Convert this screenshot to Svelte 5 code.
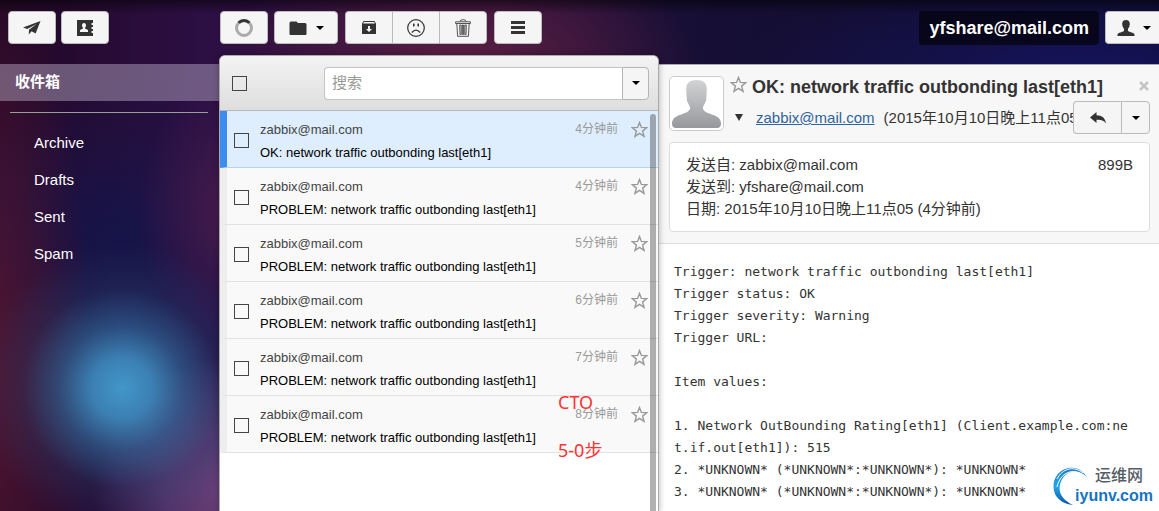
<script>
  const folders = ["Archive", "Drafts", "Sent", "Spam"];

  const PROBLEM = "PROBLEM: network traffic outbonding last[eth1]";

  let messages = $state([
    { subject: "OK: network traffic outbonding last[eth1]", age: 4, checked: false },
    { subject: PROBLEM, age: 4, checked: false },
    { subject: PROBLEM, age: 5, checked: false },
    { subject: PROBLEM, age: 6, checked: false },
    { subject: PROBLEM, age: 7, checked: false },
    { subject: PROBLEM, age: 8, checked: false },
  ]);

  let selected = $state(0);
  let allChecked = $state(false);
  let query = $state("");

  const body = `Trigger: network traffic outbonding last[eth1]
Trigger status: OK
Trigger severity: Warning
Trigger URL:

Item values:

1. Network OutBounding Rating[eth1] (Client.example.com:net.if.out[eth1]): 515
2. *UNKNOWN* (*UNKNOWN*:*UNKNOWN*): *UNKNOWN*
3. *UNKNOWN* (*UNKNOWN*:*UNKNOWN*): *UNKNOWN*`;

  function toggleAll() {
    for (const m of messages) m.checked = allChecked;
  }
</script>

{#snippet star()}
  <svg class="star" viewBox="0 0 18 18" width="17" height="17" aria-hidden="true">
    <path d="M9 1.6 11 6.8 16.7 7.1 12.3 10.7 13.8 16.2 9 13.1 4.2 16.2 5.7 10.7 1.3 7.1 7 6.8Z" />
  </svg>
{/snippet}

{#snippet caret()}
  <svg class="caret" viewBox="0 0 8 4" width="8" height="4" aria-hidden="true">
    <path d="M0 0H8L4 4Z" />
  </svg>
{/snippet}

<div class="app">
  <aside class="side">
    <div class="toolbar">
      <button class="btn" aria-label="写邮件">
        <svg viewBox="0 0 18 16" width="18" height="16">
          <path d="M17.500 1 0 7.600 4.300 9 13.600 4 6 9.800 5.800 14.600 8.600 11.200 12.600 13.600Z" />
        </svg>
      </button>
      <button class="btn" aria-label="通讯录">
        <svg viewBox="0 0 16 16" width="16" height="16">
          <path fill-rule="evenodd" d="M0 0H16V3H14.500V5H16V7H14.500V9H16V11H14.500V13H16V16H0ZM7 3C5.600 3 5 4 5 5.300 5 6.500 5.400 7.300 6 7.800V8.600L3 10V12H11V10L8 8.600V7.800C8.600 7.300 9 6.500 9 5.300 9 4 8.400 3 7 3Z" />
        </svg>
      </button>
    </div>
    <nav>
      <a class="inbox" href="#inbox">收件箱</a>
      <hr />
      {#each folders as folder}
        <a class="folder" href="#{folder.toLowerCase()}">{folder}</a>
      {/each}
    </nav>
  </aside>

  <section class="middle">
    <div class="toolbar">
      <button class="btn" aria-label="刷新">
        <svg viewBox="0 0 18 18" width="18" height="18">
          <circle cx="9" cy="9" r="7.5" fill="none" stroke="#aaa" stroke-width="3" />
          <path d="M3.700 3.700A7.500 7.500 0 0 1 14.300 3.700" fill="none" stroke="#333" stroke-width="3" />
        </svg>
      </button>
      <button class="btn wide" aria-label="移动到文件夹">
        <svg viewBox="0 0 18 14" width="18" height="14">
          <path d="M1 14 0.500 13V2Q0.500 .5 2 .5H7.500L9 2H16Q17.500 2 17.500 3.500V13L17 14Z" />
        </svg>
        {@render caret()}
      </button>
      <div class="group">
        <button class="btn" aria-label="归档">
          <svg viewBox="0 0 14 13" width="14" height="13">
            <path d="M1.500 .5H12.500L13.500 3H.5Z" fill="none" stroke="#333" />
            <path fill-rule="evenodd" d="M0 3H14V13H0ZM6 5V8H4L7 11 10 8H8V5Z" />
          </svg>
        </button>
        <button class="btn" aria-label="垃圾邮件">
          <svg viewBox="0 0 18 18" width="18" height="18">
            <circle cx="9" cy="9" r="8.300" fill="none" stroke="#333" stroke-width="1.200" />
            <path d="M4.800 13.500Q9 8.800 13.200 13.500" fill="none" stroke="#333" stroke-width="1.300" />
            <ellipse cx="6.800" cy="6" rx=".9" ry="1.800" />
            <ellipse cx="11.200" cy="6" rx=".9" ry="1.800" />
          </svg>
        </button>
        <button class="btn" aria-label="删除">
          <svg viewBox="0 0 16 18" width="16" height="18">
            <path d="M.6 4.500V2.800H15.400V4.500ZM5 2.500Q5 .7 8 .7T11 2.500M1.800 4.500 2.600 17.300H13.400L14.200 4.500M4.700 6 5 15.500H6.200V6ZM7.400 6V15.500H8.600V6ZM9.800 6V15.500H11L11.300 6Z" fill="none" stroke="#444" stroke-width=".9" />
          </svg>
        </button>
      </div>
      <button class="btn" aria-label="更多">
        <svg viewBox="0 0 14 13" width="14" height="13">
          <path d="M0 0H14V3H0ZM0 5H14V8H0ZM0 10H14V13H0Z" />
        </svg>
      </button>
    </div>

    <div class="panel">
      <div class="search-bar">
        <input type="checkbox" aria-label="全选" bind:checked={allChecked} onchange={toggleAll} />
        <div class="search">
          <input type="text" placeholder="搜索" aria-label="搜索" bind:value={query} />
          <button class="search-more" aria-label="搜索选项">{@render caret()}</button>
        </div>
      </div>

      <ul class="messages">
        {#each messages as message, i}
          <li class:active={selected === i}>
            <input type="checkbox" aria-label="选择邮件" bind:checked={message.checked} />
            <button class="summary" onclick={() => (selected = i)}>
              <span class="top">
                <span class="sender">zabbix@mail.com</span>
                <span class="age">{message.age}分钟前</span>
              </span>
              <span class="subject">{message.subject}</span>
            </button>
            <button class="plain" aria-label="加星标">{@render star()}</button>
          </li>
        {/each}
      </ul>
      <div class="scrollbar"></div>
      <div class="note">
        <div>CTO</div>
        <div>5-0步</div>
      </div>
    </div>
  </section>

  <main>
    <div class="toolbar right">
      <strong class="account">yfshare@mail.com</strong>
      <button class="btn user" aria-label="账户">
        <svg viewBox="0 0 18 16" width="18" height="16">
          <path d="M9 0C6.500 0 5.200 1.500 5.200 3.800 5.200 6 6 7.700 7 8.700V11C6 12 .8 12.500 .5 14.500V16H17.500V14.500C17.200 12.500 12 12 11 11V8.700C12 7.700 12.800 6 12.800 3.800 12.800 1.500 11.500 0 9 0Z" />
        </svg>
        {@render caret()}
      </button>
    </div>

    <article>
      <header>
        <div class="head">
          <div class="avatar">
            <svg viewBox="0 0 50 50" width="49" height="49" aria-hidden="true">
              <defs>
                <linearGradient id="person" x1="0" y1="0" x2="0" y2="1">
                  <stop offset="0" stop-color="#d2d3d5" />
                  <stop offset="1" stop-color="#97989b" />
                </linearGradient>
              </defs>
              <path fill="url(#person)" d="M25 1C18 1 14.500 4 14.500 10.500C14.500 14 15 16 15 20C15 24 18 26 18.500 30C17 34 12 35 7 37C2 39 0 42 0 45.500Q0 50 4 50H46Q50 50 50 45.500C50 42 48 39 43 37C38 35 33 34 31.500 30C32 26 35 24 35 20C35 16 35.500 14 35.500 10.500C35.500 4 32 1 25 1Z" />
            </svg>
          </div>
          <div class="heading">
            <div class="title">
              <button class="plain" aria-label="加星标">{@render star()}</button>
              <h1>OK: network traffic outbonding last[eth1]</h1>
              <button class="plain close" aria-label="关闭">
                <svg viewBox="0 0 10 10" width="10" height="10">
                  <path d="M1 1 9 9M9 1 1 9" stroke="#c4c4c4" stroke-width="2.500" />
                </svg>
              </button>
            </div>
            <div class="from">
              <button class="plain toggle" aria-label="详细信息">
                <svg viewBox="0 0 8 7" width="8" height="7"><path d="M0 0H8L4 7Z" /></svg>
              </button>
              <a href="mailto:zabbix@mail.com">zabbix@mail.com</a>
              <span class="date">(2015年10月10日晚上11点05)</span>
              <div class="group reply">
                <button class="btn" aria-label="回复">
                  <svg viewBox="0 0 16 12" width="16" height="12">
                    <path d="M6.500 0V3.200C12 3.200 15.300 6 16 11.500 14 8.500 11.500 7.500 6.500 7.800V11L0 5.500Z" />
                  </svg>
                </button>
                <button class="btn narrow" aria-label="更多回复选项">{@render caret()}</button>
              </div>
            </div>
          </div>
        </div>

        <div class="details">
          <div>
            <div>发送自: zabbix@mail.com</div>
            <div>发送到: yfshare@mail.com</div>
            <div>日期: 2015年10月10日晚上11点05 (4分钟前)</div>
          </div>
          <span>899B</span>
        </div>
      </header>
      <pre>{body}</pre>
    </article>
  </main>

  <div class="watermark">
    <svg viewBox="0 0 38 40" width="38" height="40" aria-hidden="true">
      <defs>
        <linearGradient id="swirl" x1="0" y1="0" x2="0" y2="1">
          <stop offset="0" stop-color="#1b7fc8" />
          <stop offset=".5" stop-color="#22a6ea" />
          <stop offset="1" stop-color="#0b55a8" />
        </linearGradient>
      </defs>
      <path fill="url(#swirl)" d="M36 16C32 4 22 -1 12 3C2 7 -2 18 2 28C5 34 11 38 20 39C10 34 5 27 7 19C9 9 17 4 25 6C30 7 34 10 36 16Z" />
      <path d="M4 13C9 3 20 -1 30 7M4 21C7 7 20 0 33 11" fill="none" stroke="#fff" />
    </svg>
    <div class="brand">
      <span>运维网</span>
      <b>iyunv.com</b>
    </div>
  </div>
</div>

<style>
  :global(body) {
    margin: 0;
  }

  .app {
    position: relative;
    display: grid;
    grid-template-columns: 219px 440px minmax(0, 1fr);
    min-height: 100vh;
    overflow: hidden;
    font-family: "Liberation Sans", "Noto Sans CJK SC", sans-serif;
    font-size: 15px;
    line-height: 22px;
    color: #333;
    background:
      linear-gradient(rgba(0, 0, 0, 0.5), transparent 14px),
      radial-gradient(circle at 122px 388px, #4297c9 0, rgba(62, 140, 192, 0.9) 30px, rgba(50, 115, 165, 0.6) 62px, rgba(40, 80, 130, 0.25) 100px, transparent 145px),
      radial-gradient(circle at 225px 490px, #6b4078 0, rgba(100, 65, 120, 0.7) 60px, transparent 130px),
      radial-gradient(ellipse 100px 130px at 235px 210px, #4a1b4c, transparent),
      radial-gradient(ellipse 110px 420px at -20px 360px, #561632, transparent),
      radial-gradient(ellipse 240px 110px at 460px 60px, #5a1f42, transparent),
      radial-gradient(ellipse 350px 100px at 1080px 70px, #14135a, transparent),
      radial-gradient(ellipse 220px 160px at 120px 240px, #151449, transparent),
      linear-gradient(90deg, #220826, #2c0f43 200px, #30103c 500px, #170f35 680px, #0f0c2c);
  }

  button {
    font: inherit;
    cursor: pointer;
  }

  svg {
    display: block;
    fill: #333;
  }

  .toolbar {
    display: flex;
    gap: 6px;
    height: 33px;
    padding: 11px 0 11px 1px;
  }

  .side .toolbar {
    gap: 5px;
    padding: 11px 8px 20px;
  }

  .toolbar.right {
    justify-content: flex-end;
    padding: 11px 0 20px;
  }

  .btn {
    display: flex;
    align-items: center;
    justify-content: center;
    box-sizing: border-box;
    width: 48px;
    height: 33px;
    padding: 0;
    border: 1px solid #bbb;
    border-radius: 4px;
    background: #f5f5f5;
  }

  .btn.wide {
    gap: 9px;
    width: 64px;
    margin-right: 1px;
  }

  .btn .caret,
  .search-more .caret {
    fill: #000;
  }

  .group {
    display: flex;
  }

  .toolbar .group {
    margin-right: 1px;
  }

  .group .btn:not(:last-child) {
    width: 47px;
    border-right: 0;
    border-radius: 4px 0 0 4px;
  }

  .group .btn + .btn:not(:last-child) {
    border-radius: 0;
  }

  .group .btn:last-child {
    border-radius: 0 4px 4px 0;
  }

  .plain {
    padding: 0;
    border: 0;
    background: none;
  }

  .star {
    fill: none;
    stroke: #999;
    stroke-width: 1.5;
  }

  input[type="checkbox"] {
    appearance: none;
    flex: none;
    box-sizing: border-box;
    width: 15px;
    height: 15px;
    margin: 0;
    border: 1px solid #444;
  }

  input[type="checkbox"]:checked {
    background: #555;
  }

  /* folders */
  nav {
    display: flex;
    flex-direction: column;
  }

  nav a {
    color: #fff;
    text-decoration: none;
  }

  .inbox {
    padding: 7px 15px 8px;
    font-weight: bold;
    background: rgba(210, 200, 225, 0.4);
  }

  hr {
    width: auto;
    height: 1px;
    margin: 11px 11px 12px 10px;
    border: 0;
    background: #96a096;
    align-self: stretch;
  }

  .folder {
    padding: 7px 0 8px 34px;
  }

  /* message list */
  .middle,
  main {
    display: flex;
    flex-direction: column;
  }

  .panel {
    position: relative;
    z-index: 1;
    flex: 1;
    border: 1px solid #aaa;
    border-bottom: 0;
    border-radius: 6px 6px 0 0;
    background: #fff;
    box-shadow: 0 0 6px rgba(0, 0, 0, 0.3);
  }

  .search-bar {
    display: flex;
    align-items: center;
    justify-content: space-between;
    height: 54px;
    padding: 0 9px 0 12px;
    border-bottom: 1px solid #b8b8b8;
    border-radius: 5px 5px 0 0;
    background: linear-gradient(#f3f3f3, #dedede);
  }

  .search {
    display: flex;
    width: 325px;
    height: 33px;
  }

  .search input {
    flex: 1;
    min-width: 0;
    padding: 0 7px;
    border: 1px solid #c4c4c4;
    border-right: 0;
    border-radius: 4px 0 0 4px;
    font: inherit;
    background: #fff;
  }

  .search input::placeholder {
    color: #999;
  }

  .search-more {
    display: flex;
    align-items: center;
    justify-content: center;
    width: 27px;
    padding: 0;
    border: 1px solid #b4b4b4;
    border-radius: 0 4px 4px 0;
    background: #f5f5f5;
  }

  .messages {
    margin: 0;
    padding: 0;
    list-style: none;
    font-size: 13px;
  }

  .messages li {
    display: flex;
    align-items: center;
    box-sizing: border-box;
    height: 57px;
    padding: 3px 10px 0 7px;
    border-left: 7px solid #eee;
    border-bottom: 1px solid #e2e2e2;
    background: #f9f9f9;
  }

  .messages li.active {
    border-left-color: #3b8ef0;
    border-bottom-color: #b8d4f0;
    background: #deeeff;
  }

  .messages .plain {
    align-self: flex-start;
    margin-top: 7px;
  }

  .summary {
    flex: 1;
    padding: 0 13px 0 11px;
    border: 0;
    background: none;
    text-align: left;
    line-height: 23px;
  }

  .top {
    display: flex;
    justify-content: space-between;
    height: 23px;
  }

  .sender {
    color: #444;
  }

  .age {
    font-size: 12px;
    color: #999;
  }

  .subject {
    display: block;
    height: 23px;
    color: #000;
  }

  .scrollbar {
    position: absolute;
    top: 58px;
    right: 2px;
    bottom: 0;
    width: 6px;
    border-radius: 3px 3px 0 0;
    background: rgba(0, 0, 0, 0.3);
  }

  .note {
    position: absolute;
    top: 322px;
    left: 338px;
    font-family: "Noto Sans", "Noto Sans CJK SC", sans-serif;
    font-size: 18px;
    line-height: 48px;
    color: #ff3333;
  }

  /* open message */
  .account {
    padding: 0 10px;
    border-radius: 4px;
    font-size: 18px;
    line-height: 34px;
    height: 34px;
    color: #fff;
    background: rgba(0, 0, 0, 0.6);
  }

  .btn.user {
    gap: 8px;
    width: 54px;
    padding-left: 2px;
    border-right: 0;
    border-radius: 4px 0 0 4px;
  }

  article {
    flex: 1;
    border-top: 1px solid #aaa;
    background: #fff;
  }

  header {
    padding: 11px 9px 11px 10px;
    border-bottom: 1px solid #ddd;
    background: #f7f7f7;
  }

  .head {
    display: flex;
    gap: 6px;
    height: 55px;
  }

  .avatar {
    flex: none;
    box-sizing: border-box;
    width: 55px;
    height: 55px;
    padding: 2px;
    border: 1px solid #ccc;
    border-radius: 5px;
    background: #fff;
  }

  .heading {
    flex: 1;
    min-width: 0;
  }

  .title {
    display: flex;
    align-items: center;
    gap: 5px;
    height: 22px;
  }

  .title .plain:first-child {
    align-self: flex-start;
  }

  h1 {
    flex: 1;
    margin: 0;
    font-size: 18px;
    line-height: 22px;
    white-space: nowrap;
  }

  .close {
    padding: 0 1px 3px 0;
  }

  .from {
    display: flex;
    align-items: center;
    height: 33px;
    padding-top: 3px;
  }

  .toggle {
    padding: 0 13px 0 5px;
  }

  .from a {
    color: #2f649c;
  }

  .date {
    flex: 1;
    min-width: 0;
    padding: 3px 0 2px 9px;
    overflow: hidden;
    white-space: nowrap;
  }

  .from a {
    padding-top: 1px;
  }

  .reply .btn:not(:last-child) {
    width: 48px;
  }

  .reply .btn.narrow {
    width: 29px;
  }

  .details {
    display: flex;
    justify-content: space-between;
    margin-top: 11px;
    padding: 11px 16px;
    border: 1px solid #ddd;
    border-radius: 4px;
    background: #fff;
  }

  pre {
    margin: 0;
    padding: 17px 28px 10px 15px;
    font-family: "DejaVu Sans Mono", monospace;
    font-size: 13px;
    line-height: 22px;
    color: #333;
    white-space: pre-wrap;
    word-break: break-all;
  }

  .watermark {
    position: absolute;
    right: 6px;
    bottom: 7px;
    z-index: 2;
    display: flex;
  }

  .brand {
    display: flex;
    flex-direction: column;
    align-items: flex-end;
    margin-left: -16px;
  }

  .brand span {
    padding-right: 10px;
    font-size: 16px;
    font-weight: 500;
    line-height: 20px;
    color: #555d66;
  }

  .brand b {
    font-size: 16px;
    line-height: 20px;
    color: #1474c4;
  }
</style>
